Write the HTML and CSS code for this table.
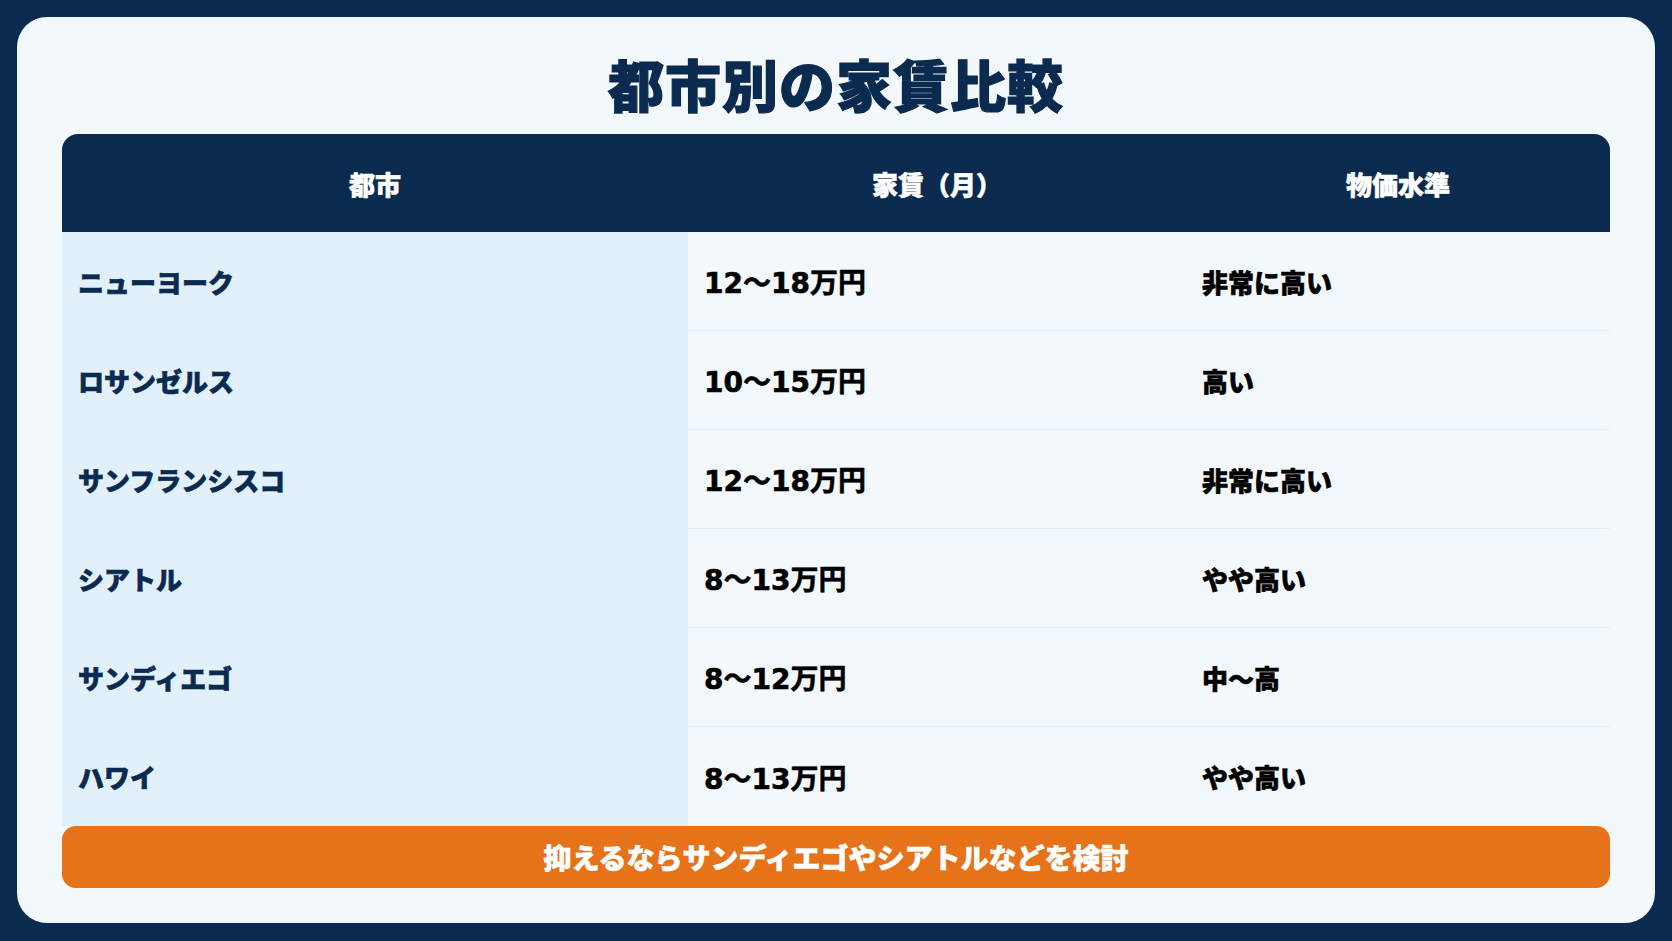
FILE: index.html
```html
<!DOCTYPE html>
<html lang="ja">
<head>
<meta charset="utf-8">
<title>都市別の家賃比較</title>
<link rel="stylesheet" href="styles.css">
</head>
<body>
<main class="card">
  <h1 class="title">都市別の家賃比較</h1>
  <table class="rent-table">
    <thead>
      <tr>
        <th class="col-city">都市</th>
        <th class="col-rent">家賃（月）</th>
        <th class="col-level">物価水準</th>
      </tr>
    </thead>
    <tbody>
      <tr><td class="city">ニューヨーク</td><td class="rent">12〜18万円</td><td>非常に高い</td></tr>
      <tr><td class="city">ロサンゼルス</td><td class="rent">10〜15万円</td><td>高い</td></tr>
      <tr><td class="city">サンフランシスコ</td><td class="rent">12〜18万円</td><td>非常に高い</td></tr>
      <tr><td class="city">シアトル</td><td class="rent">8〜13万円</td><td>やや高い</td></tr>
      <tr><td class="city">サンディエゴ</td><td class="rent">8〜12万円</td><td>中〜高</td></tr>
      <tr><td class="city">ハワイ</td><td class="rent">8〜13万円</td><td>やや高い</td></tr>
    </tbody>
  </table>
  <div class="note">抑えるならサンディエゴやシアトルなどを検討</div>
</main>
</body>
</html>
```

FILE: styles.css
```css
* { box-sizing: border-box; }
html, body {
  margin: 0;
  padding: 0;
}
body {
  width: 1672px;
  height: 941px;
  background: #0b2a50;
  padding: 17px;
  font-family: "Noto Sans CJK JP", "Noto Sans", sans-serif;
}
.card {
  width: 1638px;
  height: 906px;
  background: #f3f8fc;
  border-radius: 30px;
  padding: 32px 45px 35px;
  display: flex;
  flex-direction: column;
}
.title {
  margin: 0 0 17px;
  height: 68px;
  line-height: 68px;
  text-align: center;
  font-size: 56px;
  font-weight: 900;
  color: #0b2a50;
  letter-spacing: 1px;
  -webkit-text-stroke: 1.2px #0b2a50;
}
.rent-table {
  width: 100%;
  border-collapse: separate;
  border-spacing: 0;
  table-layout: fixed;
}
.rent-table th {
  background: #0b2a50;
  color: #ffffff;
  height: 98px;
  font-size: 26px;
  font-weight: 900;
  text-align: center;
  padding: 0 16px;
  -webkit-text-stroke: 0.6px #ffffff;
}
.rent-table th.col-city { width: 626px; border-top-left-radius: 16px; }
.rent-table th.col-rent { width: 498px; }
.rent-table th.col-level { border-top-right-radius: 16px; }
.rent-table td {
  height: 99px;
  padding: 0 16px;
  font-size: 26px;
  font-weight: 900;
  color: #000000;
  border-bottom: 1px solid #e2eef9;
  background: #f3f8fc;
  -webkit-text-stroke: 0.6px #000000;
}
.rent-table tr:last-child td { border-bottom: none; }
.rent-table td.city {
  background: #e2f0fc;
  color: #0b2a50;
  border-bottom-color: #e2f0fc;
  -webkit-text-stroke: 0.6px #0b2a50;
}
.rent-table td.rent {
  font-family: "DejaVu Sans", "Noto Sans CJK JP", sans-serif;
  font-weight: 700;
  font-size: 28px;
}
.note {
  height: 62px;
  line-height: 62px;
  background: #e6731a;
  color: #ffffff;
  border-radius: 14px;
  text-align: center;
  font-size: 28px;
  font-weight: 900;
  -webkit-text-stroke: 0.6px #ffffff;
}
```
